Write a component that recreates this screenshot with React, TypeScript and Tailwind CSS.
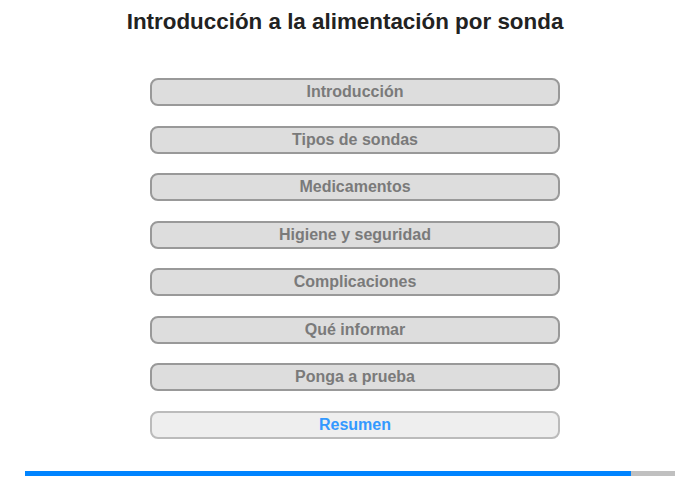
const items = [
  "Introducción",
  "Tipos de sondas",
  "Medicamentos",
  "Higiene y seguridad",
  "Complicaciones",
  "Qué informar",
  "Ponga a prueba",
];

export default function App() {
  return (
    <div className="w-[700px] h-[480px] bg-white font-['Liberation_Sans',Arial,sans-serif] flex flex-col">
      <h1 className="mt-[8px] pr-[10px] h-[28px] text-[22.4px] leading-[28px] font-bold text-[#222] text-center">
        Introducción a la alimentación por sonda
      </h1>

      <div className="mt-[42px] pl-[10px] flex flex-col items-center gap-[19.5px]">
        {items.map((t) => (
          <button
            key={t}
            className="w-[410px] h-[28px] rounded-[8px] border-2 border-[#999] bg-[#ddd] text-[16px] font-bold text-[#7a7a7a] leading-none"
          >
            {t}
          </button>
        ))}
        <button className="w-[410px] h-[28px] rounded-[8px] border-2 border-[#bbb] bg-[#eee] text-[16px] font-bold text-[#3399ff] leading-none">
          Resumen
        </button>
      </div>

      <div className="mt-auto mb-[4px] mx-[25px] h-[5px] bg-[#c0c0c0] flex">
        <div className="h-full w-[606px] bg-[#0084ff]" />
      </div>
    </div>
  );
}
